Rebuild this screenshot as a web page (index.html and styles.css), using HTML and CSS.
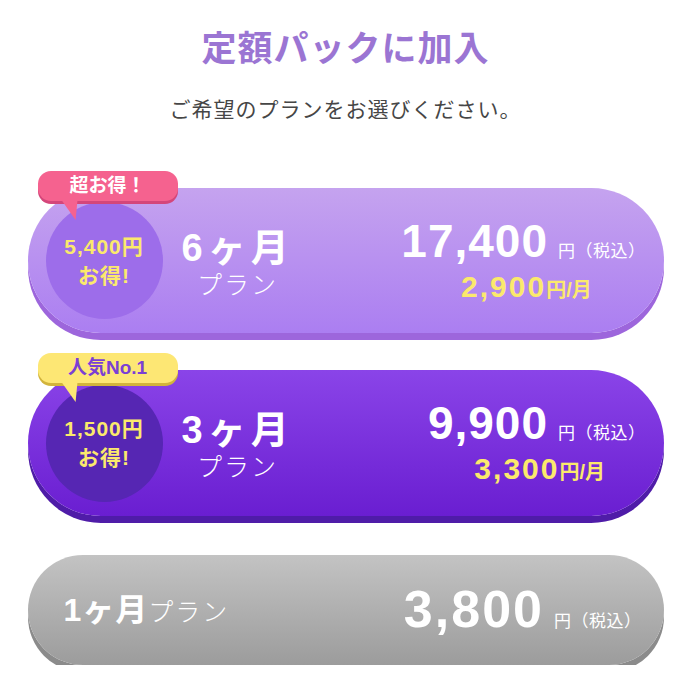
FILE: index.html
```html
<!DOCTYPE html>
<html lang="ja">
<head>
  <meta charset="UTF-8">
  <meta name="viewport" content="width=device-width, initial-scale=1.0">
  <title>定額パックに加入</title>
  <link rel="stylesheet" href="styles.css">
</head>
<body>
  <div class="container">
    <h1 class="title">定額パックに加入</h1>
    <p class="lead">ご希望のプランをお選びください。</p>

    <div class="plans">
      <!-- 6ヶ月 -->
      <div class="plan plan-six">
        <span class="tag tag-pink">超お得！</span>
        <div class="save">
          <span>5,400円</span>
          <span>お得!</span>
        </div>
        <div class="term">
          <span class="term-num">6ヶ月</span>
          <span class="term-label">プラン</span>
        </div>
        <div class="price">
          <div class="price-main"><span class="amount">17,400</span><span class="tax">円（税込）</span></div>
          <div class="price-month"><span class="month-num">2,900</span>円/月</div>
        </div>
      </div>

      <!-- 3ヶ月 -->
      <div class="plan plan-three">
        <span class="tag tag-yellow">人気No.1</span>
        <div class="save">
          <span>1,500円</span>
          <span>お得!</span>
        </div>
        <div class="term">
          <span class="term-num">3ヶ月</span>
          <span class="term-label">プラン</span>
        </div>
        <div class="price">
          <div class="price-main"><span class="amount">9,900</span><span class="tax">円（税込）</span></div>
          <div class="price-month"><span class="month-num">3,300</span>円/月</div>
        </div>
      </div>

      <!-- 1ヶ月 -->
      <div class="plan plan-one">
        <div class="term-inline">
          <span class="term-num">1ヶ月</span><span class="term-label">プラン</span>
        </div>
        <div class="price">
          <div class="price-main"><span class="amount">3,800</span><span class="tax">円（税込）</span></div>
        </div>
      </div>
    </div>
  </div>
</body>
</html>
```

FILE: styles.css
```css
body {
  font-family: "Liberation Sans", "Noto Sans CJK JP", sans-serif;
  margin: 0;
  padding: 0;
  background-color: #fff;
  color: #fff;
}

.container {
  width: 636px;
  margin: 0 auto;
  padding-top: 27px;
}

.title {
  margin: 0;
  text-align: center;
  font-size: 35px;
  line-height: 44px;
  font-weight: bold;
  letter-spacing: 1px;
  color: #9b75d3;
}

.lead {
  margin: 25px 0 0;
  text-align: center;
  font-size: 21px;
  line-height: 28px;
  letter-spacing: 1px;
  color: #464646;
}

.plans {
  display: flex;
  flex-direction: column;
  gap: 37px;
  margin-top: 64px;
}

.plan {
  position: relative;
  display: flex;
  align-items: center;
  height: 145px;
  padding: 0 18px 0 18px;
  border-radius: 73px;
}

.plan-six {
  background: linear-gradient(#c5a3ef, #ab7ef1);
  box-shadow: 0 7px 0 #9d66dc;
}

.plan-three {
  height: 146px;
  background: linear-gradient(#8a44e8, #6a1ed1);
  box-shadow: 0 7px 0 #4f1ca8;
}

.plan-one {
  height: 110px;
  margin-top: 2px;
  padding: 0 22px 0 36px;
  border-radius: 56px;
  background: linear-gradient(#c3c3c3, #9c9c9c);
  box-shadow: 0 7px 0 #8b8b8b;
}

/* speech bubble tag */
.tag {
  position: absolute;
  left: 10px;
  top: -17px;
  width: 140px;
  height: 30px;
  border-radius: 13px;
  text-align: center;
  font-size: 19px;
  line-height: 30px;
  font-weight: bold;
  z-index: 2;
}

.tag::after {
  content: "";
  position: absolute;
  left: 24px;
  top: 29px;
  width: 16px;
  height: 20px;
  background: inherit;
  clip-path: polygon(0 0, 100% 0, 88% 100%);
}

.tag-pink {
  background-color: #f5628f;
  box-shadow: 0 3px 0 #d4467a;
  color: #fff;
}

.tag-yellow {
  background-color: #fde774;
  box-shadow: 0 3px 0 #d2b43c;
  color: #7b3fd4;
}

.save {
  display: flex;
  flex-direction: column;
  align-items: center;
  justify-content: center;
  flex-shrink: 0;
  width: 117px;
  height: 117px;
  border-radius: 50%;
  color: #fbe96c;
  font-size: 21px;
  line-height: 29px;
  font-weight: bold;
  letter-spacing: 1px;
}

.plan-six .save {
  background-color: #9d6dea;
}

.plan-three .save {
  background-color: #5626b3;
}

.term {
  display: flex;
  flex-direction: column;
  align-items: center;
  margin-left: 19px;
  margin-top: 6px;
}

.term-num {
  font-size: 38px;
  line-height: 42px;
  font-weight: bold;
  letter-spacing: 5px;
}

.term-label {
  font-size: 25px;
  line-height: 32px;
  letter-spacing: 2px;
  font-weight: 300;
}

.term-inline .term-num {
  font-size: 32px;
  letter-spacing: 1px;
}

.term-inline .term-label {
  font-size: 25px;
  letter-spacing: 2px;
}

.price {
  display: flex;
  flex-direction: column;
  align-items: center;
  margin-left: auto;
  margin-top: -2px;
}

.price-main {
  display: flex;
  align-items: baseline;
  line-height: 46px;
}

.amount {
  font-size: 46px;
  font-weight: bold;
  letter-spacing: 1px;
}

.tax {
  margin-left: 10px;
  font-size: 17px;
  letter-spacing: 0.5px;
}

.price-month {
  margin-left: 6px;
  color: #fbe96c;
  font-size: 20px;
  font-weight: bold;
  line-height: 24px;
}

.month-num {
  font-size: 30px;
  letter-spacing: 2px;
}

.plan-one .price {
  margin-top: 10px;
}

.plan-one .amount {
  font-size: 52px;
  letter-spacing: 2px;
}
```
